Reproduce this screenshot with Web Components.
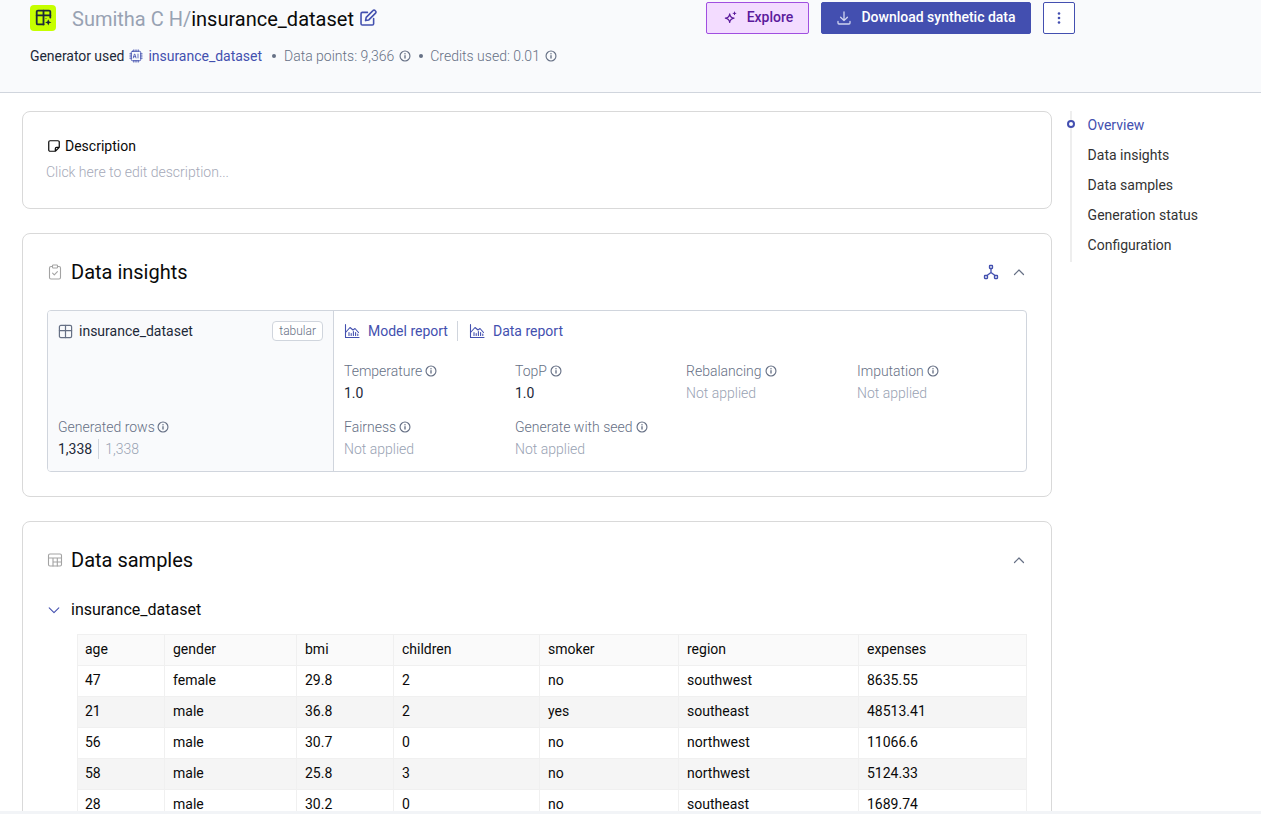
<!DOCTYPE html>
<html lang="en"><head><meta charset="utf-8"><title>insurance_dataset</title>
<style>
html,body{margin:0;height:100%;overflow:hidden;background:#fff}
body{font:14px/20px Roboto,"Liberation Sans",sans-serif;color:#0a0a0a}
app-page{height:814px}
</style></head><body>
<template id="t-page"><style>
:host{display:grid;grid-template-rows:93px 1fr 3px;width:1261px;height:814px;overflow:hidden}
main{display:grid;grid-template-columns:1030px 1fr;column-gap:18px;padding:18px 0 0 22px;overflow:hidden;min-height:0}
.col{display:flex;flex-direction:column;gap:24px;min-width:0}
.strip{background:#f2f4f7}
</style><slot name="header"></slot><main><div class="col"><slot></slot></div><slot name="aside"></slot></main><div class="strip"></div></template>

<template id="t-header"><style>
:host{display:flex;justify-content:space-between;box-sizing:border-box;background:#f9fafc;border-bottom:1px solid #d0d5dd;padding:2px 186px 0 30px;height:93px}
.logo{width:26px;height:26px;border-radius:4px;background:#c6ff00;display:flex;align-items:center;justify-content:center;margin-top:-1px;color:#1d2939}
.title{display:flex;align-items:center;height:32px;font-size:20px;line-height:28px}
.t{margin-left:16px;color:#98a2b3;margin-top:1px}.n{color:#0a0a0a}
.edit{margin-left:5px;color:#4350af;display:flex;margin-top:-1px}
.meta{display:flex;align-items:center;margin-top:6px;height:32px;color:#667085;font-weight:300}
.meta .g{color:#1d2939;font-weight:400;letter-spacing:-.05px}.link{color:#4350af;display:flex;align-items:center;gap:5px;margin-left:5px;font-weight:400;letter-spacing:-.02px}
.dot{width:4px;height:4px;border-radius:50%;background:#667085;margin:0 8px 0 10px}
.dot.d2{margin:0 7px 0 8px}
.iw{display:flex;margin-left:5px;color:#667085}
.actions{display:flex;gap:12px;align-items:flex-start}
button{font:500 14px/20px Roboto,sans-serif;height:32px;box-sizing:border-box;border-radius:2px;display:flex;align-items:center;justify-content:center;padding:0 0 2px;cursor:pointer}
button x-icon{margin-top:2px}
.explore{width:103px;gap:9px;padding-left:2px;background:#f3dcff;border:1px solid #a04fe0;color:#5b1a9c}
.dl{width:210px;gap:9px;background:#434fb0;border:1px solid #434fb0;color:#fff}
.dl x-icon{color:#d0d5f0}
.more{width:32px;background:#fff;border:1px solid #434fb0;color:#434fb0}
</style>
<div><div class="title"><span class="logo"><x-icon name="logo" size="17"></x-icon></span><span class="t">Sumitha C H/<span class="n">insurance_dataset</span></span><span class="edit"><x-icon name="edit" size="18"></x-icon></span></div>
<div class="meta"><span class="g">Generator used</span><span class="link"><x-icon name="chip" size="14"></x-icon>insurance_dataset</span><span class="dot"></span>Data points: 9,366<span class="iw"><x-icon name="info" size="12"></x-icon></span><span class="dot d2"></span>Credits used: 0.01<span class="iw"><x-icon name="info" size="12"></x-icon></span></div></div>
<div class="actions"><button class="explore"><x-icon name="spark" size="14"></x-icon>Explore</button><button class="dl"><x-icon name="download" size="16"></x-icon>Download synthetic data</button><button class="more" aria-label="More"><x-icon name="kebab" size="16"></x-icon></button></div>
</template>

<template id="t-card"><style>
:host{display:block;box-sizing:border-box;border:1px solid #d9d9d9;border-radius:8px;padding:0 24px;background:#fff;flex:none}
.h{display:flex;align-items:center;height:28px;font-size:20px;line-height:28px;margin-top:24px;margin-bottom:24px}
.h x-icon.lead{color:#a3a3a3;margin-right:8px}
.r{margin-left:auto;display:flex;gap:12px;align-items:center;color:#667085}
::slotted(x-icon){color:#4350af}
</style><div class="h" part="h"><x-icon class="lead"></x-icon><span id="tt"></span><span class="r"><slot name="tools"></slot><x-icon name="up" size="16"></x-icon></span></div><slot></slot></template>

<template id="t-desc"><style>
:host{display:block;box-sizing:border-box;height:98px;border:1px solid #d9d9d9;border-radius:8px;padding:24px 23px;flex:none}
.l{display:flex;align-items:center;gap:4px;color:#0a0a0a;height:20px;padding-left:1px}
.p{margin-top:6px;color:#a5a9b8;font-weight:300}
</style><div class="l"><x-icon name="note" size="14"></x-icon>Description</div><div class="p">Click here to edit description...</div></template>

<template id="t-insight"><style>
:host{display:grid;grid-template-columns:286px 1fr;box-sizing:border-box;height:162px;border:1px solid #d0d5dd;border-radius:4px;margin-bottom:24px;overflow:hidden}
.l{background:#f9fafc;border-right:1px solid #d0d5dd;padding:10px 10px 12px;display:flex;flex-direction:column;justify-content:space-between}
.top{display:flex;align-items:center;justify-content:space-between}
.nm{display:flex;align-items:center;gap:6px;color:#1d2939}
.nm x-icon{color:#667085}
.tag{font-size:12px;line-height:16px;color:#667085;border:1px solid #d0d5dd;border-radius:4px;padding:1px 6px;background:#fff;font-weight:300}
.lab{color:#667085;display:flex;align-items:center;gap:2px;font-weight:300}
.vals{display:flex;align-items:center;margin-top:2px;color:#1d2939}
.vals i{font-style:normal;color:#98a2b3;font-weight:300;border-left:1px solid #d0d5dd;padding-left:6px;margin-left:6px}
.r{padding:10px 10px;min-width:0}
.links{display:flex;align-items:center;height:20px;color:#4350af}
.links a{display:flex;align-items:center;gap:8px}
.links a+a{border-left:1px solid #d0d5dd;padding-left:11px;margin-left:9px}
.links x-icon{color:#4350af}
.grid{display:grid;grid-template-columns:repeat(4,171px);row-gap:14px;margin-top:20px}
</style>
<div class="l"><div class="top"><span class="nm"><x-icon name="table" size="15"></x-icon>insurance_dataset</span><span class="tag">tabular</span></div>
<div><div class="lab">Generated rows<x-icon name="info" size="12"></x-icon></div><div class="vals">1,338<i>1,338</i></div></div></div>
<div class="r"><div class="links"><a><x-icon name="chart" size="16"></x-icon>Model report</a><a><x-icon name="chart" size="16"></x-icon>Data report</a></div>
<div class="grid">
<info-item label="Temperature" value="1.0" strong></info-item><info-item label="TopP" value="1.0" strong></info-item><info-item label="Rebalancing" value="Not applied"></info-item><info-item label="Imputation" value="Not applied"></info-item>
<info-item label="Fairness" value="Not applied"></info-item><info-item label="Generate with seed" value="Not applied"></info-item>
</div></div></template>

<template id="t-info"><style>
:host{display:block}
.lab{color:#667085;display:flex;align-items:center;gap:3px;font-weight:300}
.val{color:#98a2b3;margin-top:2px;font-weight:300}
:host([strong]) .val{color:#1d2939;font-weight:400}
</style><div class="lab"><span id="l"></span><x-icon name="info" size="12"></x-icon></div><div class="val" id="v"></div></template>

<template id="t-table"><style>
:host{display:block;margin-left:30px;padding-top:2px}
.sub{display:flex;align-items:center;height:20px;margin-left:-30px;margin-bottom:14px;font-size:16px;color:#0a0a0a;gap:10px}
.sub x-icon{color:#4350af}
table{border-collapse:collapse;table-layout:fixed;width:949px;color:#0a0a0a}
td,th{font-weight:400;text-align:left;padding:4px 7px 6px 8px;height:20px;border:1px solid #f0f0f0;line-height:20px;box-sizing:content-box}
td:first-child,th:first-child{padding-left:7px}
th{background:#fafafa}
tbody tr:nth-child(even){background:#f5f5f5}
</style><div class="sub"><x-icon name="down" size="14"></x-icon><span id="cap"></span></div><table><colgroup id="cg"></colgroup><thead></thead><tbody></tbody></table></template>

<template id="t-toc"><style>
:host{display:block;align-self:start;position:relative;border-left:2px solid #eee;height:151px;box-sizing:border-box}
a{display:flex;align-items:center;height:30px;padding-left:15.6px;color:#333;position:relative;top:-1px}
a.on{color:#4350af}
.d{position:absolute;left:-5px;top:9px;width:8px;height:8px;box-sizing:border-box;border:2px solid #434fb0;border-radius:50%;background:#fff}
</style><div class="d"></div><a class="on">Overview</a><a>Data insights</a><a>Data samples</a><a>Generation status</a><a>Configuration</a></template>

<app-page>
  <app-header slot="header"></app-header>
  <desc-card></desc-card>
  <app-card heading="Data insights" icon="clip"><x-icon slot="tools" name="tree" size="16"></x-icon><insight-box></insight-box></app-card>
  <app-card heading="Data samples" icon="tablegray"><data-table caption="insurance_dataset"></data-table></app-card>
  <toc-nav slot="aside"></toc-nav>
</app-page>

<script>
const S='fill="none" stroke="currentColor" stroke-linecap="round" stroke-linejoin="round"';
const I={
info:`<g ${S}><circle cx="8" cy="8" r="6.6" stroke-width="1.5"/><path d="M8 7.6v3.2" stroke-width="1.8"/><path d="M8 5v.1" stroke-width="1.9"/></g>`,
logo:`<g ${S} stroke-width="1.7"><path d="M8 14.5H2.8a1.2 1.2 0 0 1-1.2-1.2V2.7a1.2 1.2 0 0 1 1.2-1.2h10.4a1.2 1.2 0 0 1 1.2 1.2V8"/><path d="M1.6 6h12.8M8 1.5V14.5"/></g><path d="M12.5 9.6l.9 2.1 2.1.9-2.1.9-.9 2.1-.9-2.1-2.1-.9 2.1-.9z" fill="currentColor"/><path d="M9.9 8.6h.9v.9h-.9z" fill="currentColor"/>`,
edit:`<g ${S} stroke-width="1.4"><path d="M7.5 3H3a1.2 1.2 0 0 0-1.2 1.2V13A1.2 1.2 0 0 0 3 14.2h8.8A1.2 1.2 0 0 0 13 13V8.5"/><path d="M5.8 10.3l.6-2.9L12.4 1.4a1.3 1.3 0 0 1 1.9 0l.4.4a1.3 1.3 0 0 1 0 1.9L8.7 9.7z"/></g>`,
chip:`<g ${S} stroke-width="1.1"><rect x="2.6" y="2.6" width="10.8" height="10.8" rx="1.4"/><path d="M5.5 1v1.6M8 1v1.6M10.5 1v1.6M5.5 13.4V15M8 13.4V15M10.5 13.4V15M1 5.5h1.6M1 8h1.6M1 10.5h1.6M13.4 5.5H15M13.4 8H15M13.4 10.5H15"/><path d="M4.9 10.2L6.2 5.8h.5l1.3 4.4M5.3 8.8h2.3M10.3 5.8v4.4" stroke-width=".9"/></g>`,
spark:`<path d="M6.5 3.2C6.9 6 7.7 7.8 11.5 8.2 7.7 8.6 6.9 10.4 6.5 13.2 6.1 10.4 5.3 8.6 1.5 8.2 5.3 7.8 6.1 6 6.5 3.2z" ${S} stroke-width="1.3"/><path d="M12 1.2v3M10.5 2.7h3" ${S} stroke-width="1.1"/>`,
download:`<g ${S} stroke-width="1.3"><path d="M8 2v8.5M4.6 7.2L8 10.6l3.4-3.4"/><path d="M2 11.5V13a1 1 0 0 0 1 1h10a1 1 0 0 0 1-1v-1.5"/></g>`,
kebab:`<g fill="currentColor"><circle cx="8" cy="3.5" r="1.3"/><circle cx="8" cy="8" r="1.3"/><circle cx="8" cy="12.5" r="1.3"/></g>`,
up:`<path d="M3.5 10.5L8 6l4.5 4.5" ${S} stroke-width="1.2"/>`,
down:`<path d="M2.5 5.5L8 11l5.5-5.5" ${S} stroke-width="1.2"/>`,
note:`<path d="M14 9.5V3.5a1.5 1.5 0 0 0-1.5-1.5h-9A1.5 1.5 0 0 0 2 3.5v9A1.5 1.5 0 0 0 3.5 14h6zM14 9.5h-3a1.5 1.5 0 0 0-1.5 1.5v3" ${S} stroke-width="1.4"/>`,
clip:`<g ${S} stroke-width="1.1"><rect x="2.5" y="2.5" width="11" height="12.5" rx="1.5"/><rect x="5.5" y="1" width="5" height="3" rx=".8" fill="#fff"/><path d="M5.6 9.2l1.7 1.7 3.1-3.2"/></g>`,
tablegray:`<g ${S} stroke-width="1.1"><rect x="1.5" y="2" width="13" height="12" rx="1.5"/><path d="M1.5 6h13M6 6v8M6 10h8.5M10.3 6v8"/></g>`,
table:`<g ${S} stroke-width="1.3"><rect x="1.5" y="1.5" width="13" height="13" rx="1.5"/><path d="M1.5 7h13M8 1.5v13"/></g>`,
tree:`<g ${S} stroke-width="1.3"><rect x="6.5" y="1.5" width="3" height="3" rx=".5"/><rect x="1.5" y="11.5" width="3" height="3" rx=".5"/><rect x="11.5" y="11.5" width="3" height="3" rx=".5"/><path d="M8 4.5V8.5M8 8.5L4 11.5M8 8.5l4 3"/></g>`,
chart:`<g ${S} stroke-width="1.1"><path d="M1.5 1.5v13H15"/><path d="M1.5 9.5L6 4.5l3 2.5L11 5.5l3.5 4"/><path d="M5 12.5v-3M7.2 12.5v-2M9.4 12.5v-4M11.6 12.5v-3M13.8 12.5v-1.5"/></g>`
};
function T(id){return document.getElementById(id).content.cloneNode(true)}
class Base extends HTMLElement{constructor(){super();this.attachShadow({mode:'open'}).appendChild(T(this.constructor.tpl))}}
class XIcon extends HTMLElement{
  constructor(){super();this.attachShadow({mode:'open'})}
  connectedCallback(){this.render()}
  render(){const s=this.getAttribute('size')||16;this.shadowRoot.innerHTML=`<style>:host{display:inline-flex;flex:none;line-height:0}</style><svg width="${s}" height="${s}" viewBox="0 0 16 16" aria-hidden="true">${I[this.getAttribute('name')]||''}</svg>`}
}
class AppPage extends Base{static tpl='t-page'}
class AppHeader extends Base{static tpl='t-header'}
class DescCard extends Base{static tpl='t-desc'}
class InsightBox extends Base{static tpl='t-insight'}
class TocNav extends Base{static tpl='t-toc'}
class AppCard extends Base{static tpl='t-card';
  connectedCallback(){this.shadowRoot.getElementById('tt').textContent=this.getAttribute('heading');
    const l=this.shadowRoot.querySelector('.lead');l.setAttribute('name',this.getAttribute('icon'));l.setAttribute('size','16');l.render&&l.isConnected&&l.render()}}
class InfoItem extends Base{static tpl='t-info';
  connectedCallback(){this.shadowRoot.getElementById('l').textContent=this.getAttribute('label');this.shadowRoot.getElementById('v').textContent=this.getAttribute('value')}}
class DataTable extends Base{static tpl='t-table';
  connectedCallback(){const r=this.shadowRoot;r.getElementById('cap').textContent=this.getAttribute('caption');
    const w=[87,132,97,146,139,180,168];r.getElementById('cg').innerHTML=w.map(x=>`<col style="width:${x}px">`).join('');
    const h=['age','gender','bmi','children','smoker','region','expenses'];
    const d=[[47,'female',29.8,2,'no','southwest','8635.55'],[21,'male',36.8,2,'yes','southeast','48513.41'],[56,'male',30.7,0,'no','northwest','11066.6'],[58,'male',25.8,3,'no','northwest','5124.33'],[28,'male',30.2,0,'no','southeast','1689.74']];
    r.querySelector('thead').innerHTML='<tr>'+h.map(x=>`<th>${x}</th>`).join('')+'</tr>';
    r.querySelector('tbody').innerHTML=d.map(a=>'<tr>'+a.map(x=>`<td>${x}</td>`).join('')+'</tr>').join('')}}
customElements.define('x-icon',XIcon);
customElements.define('info-item',InfoItem);
customElements.define('insight-box',InsightBox);
customElements.define('data-table',DataTable);
customElements.define('desc-card',DescCard);
customElements.define('app-card',AppCard);
customElements.define('app-header',AppHeader);
customElements.define('toc-nav',TocNav);
customElements.define('app-page',AppPage);
</script>
</body></html>
